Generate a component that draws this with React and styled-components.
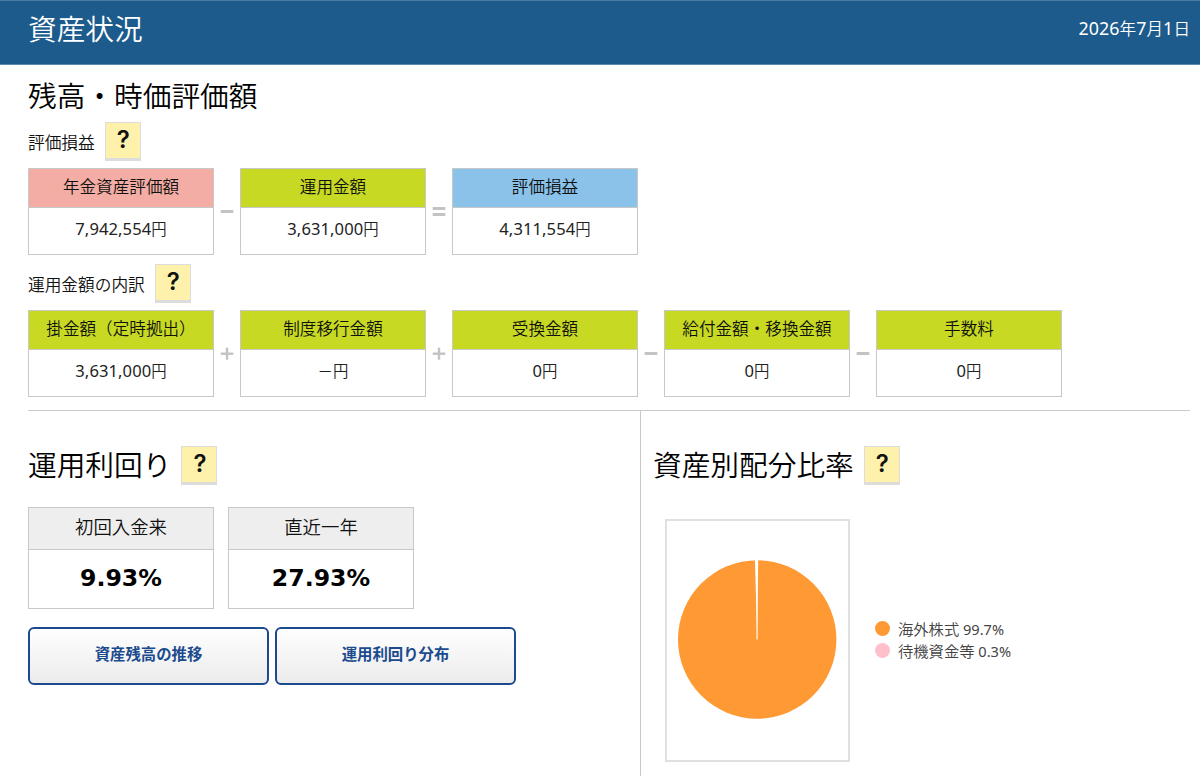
import React from 'react';
import styled, { createGlobalStyle } from 'styled-components';

const GlobalStyle = createGlobalStyle`
  * { box-sizing: border-box; }
  body {
    margin: 0;
    background: #fff;
    color: #111;
    font-family: "Noto Sans CJK JP", "Noto Sans", sans-serif;
    font-weight: 350;
    overflow: hidden;
  }
  h1, h2, h3, p, dl, dt, dd, ul { margin: 0; padding: 0; font-weight: inherit; }
`;

const Page = styled.div`
  width: 1200px;
  height: 776px;
  overflow: hidden;
  display: flex;
  flex-direction: column;
`;

const Header = styled.header`
  display: flex;
  justify-content: space-between;
  height: 65px;
  flex: none;
  padding: 0 10px 0 28px;
  background: #1c5b8c;
  border-top: 1px solid #4a7da5;
  border-bottom: 1px solid #5b8aad;
  color: #fff;
`;

const PageTitle = styled.h1`
  font-size: 28.7px;
  line-height: 54px;
`;

const PageDate = styled.p`
  font-size: 16.6px;
  line-height: 54px;
`;

const Num = styled.span`
  font-family: "Noto Sans", sans-serif;
  font-weight: 400;
  font-size: 1.075em;
  letter-spacing: 0.1px;
`;

const Main = styled.main`
  display: flex;
  flex-direction: column;
  flex: 1;
  padding: 0 10px 0 28px;
`;

const SectionTitle = styled.h2`
  font-size: 28.7px;
  line-height: ${(p) => p.$line || 40}px;
  color: #000;
`;

const Balance = styled.section`
  height: 346px;
  padding-top: 10px;
  border-bottom: 1px solid #ccc;
`;

const LabelRow = styled.div`
  display: flex;
  align-items: flex-start;
  gap: 10px;
  height: 39px;
  margin-top: ${(p) => p.$top}px;
`;

const Label = styled.h3`
  font-size: 16.7px;
  line-height: 40px;
`;

const Help = styled.button`
  width: 36px;
  height: 39px;
  flex: none;
  padding: 0 0 0 1px;
  background: #fdf1ac;
  border: 1px solid #dcdcdc;
  border-bottom-width: 3px;
  font: 600 24px/34px Inter, sans-serif;
  color: #111;
  text-align: center;
  display: flex;
  justify-content: center;
`;

const Formula = styled.div`
  display: flex;
  margin-top: ${(p) => p.$top}px;
`;

const Card = styled.dl`
  width: 186px;
  height: 87px;
  border: 1px solid #c8c8c8;
  text-align: center;
`;

const tones = { pink: '#f4ada4', lime: '#c7d922', sky: '#8ac2ea' };

const CardHead = styled.dt`
  height: 39px;
  background: ${(p) => tones[p.$tone]};
  border-bottom: 1px solid #c8c8c8;
  font-size: 16.6px;
  line-height: 34px;
  white-space: nowrap;
`;

const CardValue = styled.dd`
  font-size: 15.4px;
  line-height: 41px;
  color: #222;
`;

const OperatorIcon = styled.svg`
  width: 26px;
  height: 87px;
  flex: none;
  fill: #c3c3c3;
`;

const Lower = styled.div`
  display: flex;
  flex: 1;
`;

const Yield = styled.section`
  width: 613px;
  border-right: 1px solid #c8c8c8;
`;

const Allocation = styled.section`
  flex: 1;
  padding-left: 12px;
`;

const TitleRow = styled.div`
  display: flex;
  gap: 10px;
  height: 39px;
  margin-top: 35px;
`;

const Rates = styled.div`
  display: flex;
  gap: 14px;
  margin-top: 22px;
`;

const RateCard = styled.dl`
  width: 186px;
  height: 102px;
  border: 1px solid #c8c8c8;
  text-align: center;
`;

const RateHead = styled.dt`
  height: 42px;
  background: #eee;
  border-bottom: 1px solid #c8c8c8;
  font-size: 18.4px;
  line-height: 37px;
`;

const RateValue = styled.dd`
  font: 700 23.6px/57px "DejaVu Sans", sans-serif;
  color: #000;
`;

const Actions = styled.div`
  display: flex;
  gap: 6px;
  margin-top: 18px;
`;

const ActionButton = styled.button`
  width: 241px;
  height: 58px;
  padding: 0 0 6px;
  border: 2px solid #1b4b8e;
  border-radius: 6px;
  background: linear-gradient(#fff, #ebebeb);
  font: 700 15.4px "Noto Sans CJK JP", sans-serif;
  color: #1b4b8e;
`;

const Chart = styled.div`
  display: flex;
  margin: 34px 0 0 12px;
`;

const PieFrame = styled.div`
  width: 185px;
  height: 243px;
  border: 2px solid #e0e0e0;

  svg { display: block; }
`;

const Legend = styled.ul`
  list-style: none;
  margin: 98px 0 0 25px;
`;

const LegendItem = styled.li`
  display: flex;
  align-items: center;
  gap: 8px;
  height: 22.5px;
  font-size: 15.3px;
  line-height: 22px;
  color: #444;
  white-space: pre;
`;

const Dot = styled.span`
  width: 15px;
  height: 15px;
  border-radius: 50%;
  background: ${(p) => p.$color};
`;

const LegendNum = styled.span`
  font-family: "Noto Sans", sans-serif;
  font-weight: 400;
  font-size: 14.6px;
`;

function Operator({ kind }) {
  return (
    <OperatorIcon viewBox="0 0 26 87">
      {kind === '=' ? (
        <>
          <rect x="6.7" y="39" width="12.6" height="3" />
          <rect x="6.7" y="45" width="12.6" height="3" />
        </>
      ) : (
        <rect x="6.7" y={kind === '+' ? 42.5 : 42} width="12.6" height={kind === '+' ? 2.4 : 3} />
      )}
      {kind === '+' && <rect x="11.8" y="37.7" width="2.4" height="12" />}
    </OperatorIcon>
  );
}

function Amount({ value }) {
  return (
    <CardValue>
      {value === '－' ? value : <Num>{value}</Num>}円
    </CardValue>
  );
}

function FormulaRow({ items, top }) {
  return (
    <Formula $top={top}>
      {items.map((it) => (
        <React.Fragment key={it.label}>
          {it.op && <Operator kind={it.op} />}
          <Card>
            <CardHead $tone={it.tone}>{it.label}</CardHead>
            <Amount value={it.value} />
          </Card>
        </React.Fragment>
      ))}
    </Formula>
  );
}

const profit = [
  { label: '年金資産評価額', value: '7,942,554', tone: 'pink' },
  { label: '運用金額', value: '3,631,000', tone: 'lime', op: '-' },
  { label: '評価損益', value: '4,311,554', tone: 'sky', op: '=' },
];

const breakdown = [
  { label: '掛金額（定時拠出）', value: '3,631,000', tone: 'lime' },
  { label: '制度移行金額', value: '－', tone: 'lime', op: '+' },
  { label: '受換金額', value: '0', tone: 'lime', op: '+' },
  { label: '給付金額・移換金額', value: '0', tone: 'lime', op: '-' },
  { label: '手数料', value: '0', tone: 'lime', op: '-' },
];

export default function App() {
  return (
    <Page>
      <GlobalStyle />
      <Header>
        <PageTitle>資産状況</PageTitle>
        <PageDate>
          <Num>2026</Num>年<Num>7</Num>月<Num>1</Num>日
        </PageDate>
      </Header>
      <Main>
        <Balance>
          <SectionTitle>残高・時価評価額</SectionTitle>
          <LabelRow $top={7}>
            <Label>評価損益</Label>
            <Help>?</Help>
          </LabelRow>
          <FormulaRow items={profit} top={7} />
          <LabelRow $top={9}>
            <Label>運用金額の内訳</Label>
            <Help>?</Help>
          </LabelRow>
          <FormulaRow items={breakdown} top={7} />
        </Balance>
        <Lower>
          <Yield>
            <TitleRow>
              <SectionTitle $line={36}>運用利回り</SectionTitle>
              <Help>?</Help>
            </TitleRow>
            <Rates>
              <RateCard>
                <RateHead>初回入金来</RateHead>
                <RateValue>9.93%</RateValue>
              </RateCard>
              <RateCard>
                <RateHead>直近一年</RateHead>
                <RateValue>27.93%</RateValue>
              </RateCard>
            </Rates>
            <Actions>
              <ActionButton>資産残高の推移</ActionButton>
              <ActionButton>運用利回り分布</ActionButton>
            </Actions>
          </Yield>
          <Allocation>
            <TitleRow>
              <SectionTitle $line={36}>資産別配分比率</SectionTitle>
              <Help>?</Help>
            </TitleRow>
            <Chart>
              <PieFrame>
                <svg width="181" height="239" viewBox="0 0 181 239">
                  <circle cx="90.2" cy="118.5" r="79.2" fill="#ff9933" />
                  <path d="M90.2 119 L87.9 38 L91.2 38 Z" fill="#fff" />
                  <path d="M90 118.5 V38" stroke="#fff" strokeWidth="1" />
                </svg>
              </PieFrame>
              <Legend>
                <LegendItem>
                  <Dot $color="#ff9933" />
                  <span>海外株式<LegendNum> 99.7%</LegendNum></span>
                </LegendItem>
                <LegendItem>
                  <Dot $color="#ffc0cb" />
                  <span>待機資金等<LegendNum> 0.3%</LegendNum></span>
                </LegendItem>
              </Legend>
            </Chart>
          </Allocation>
        </Lower>
      </Main>
    </Page>
  );
}
